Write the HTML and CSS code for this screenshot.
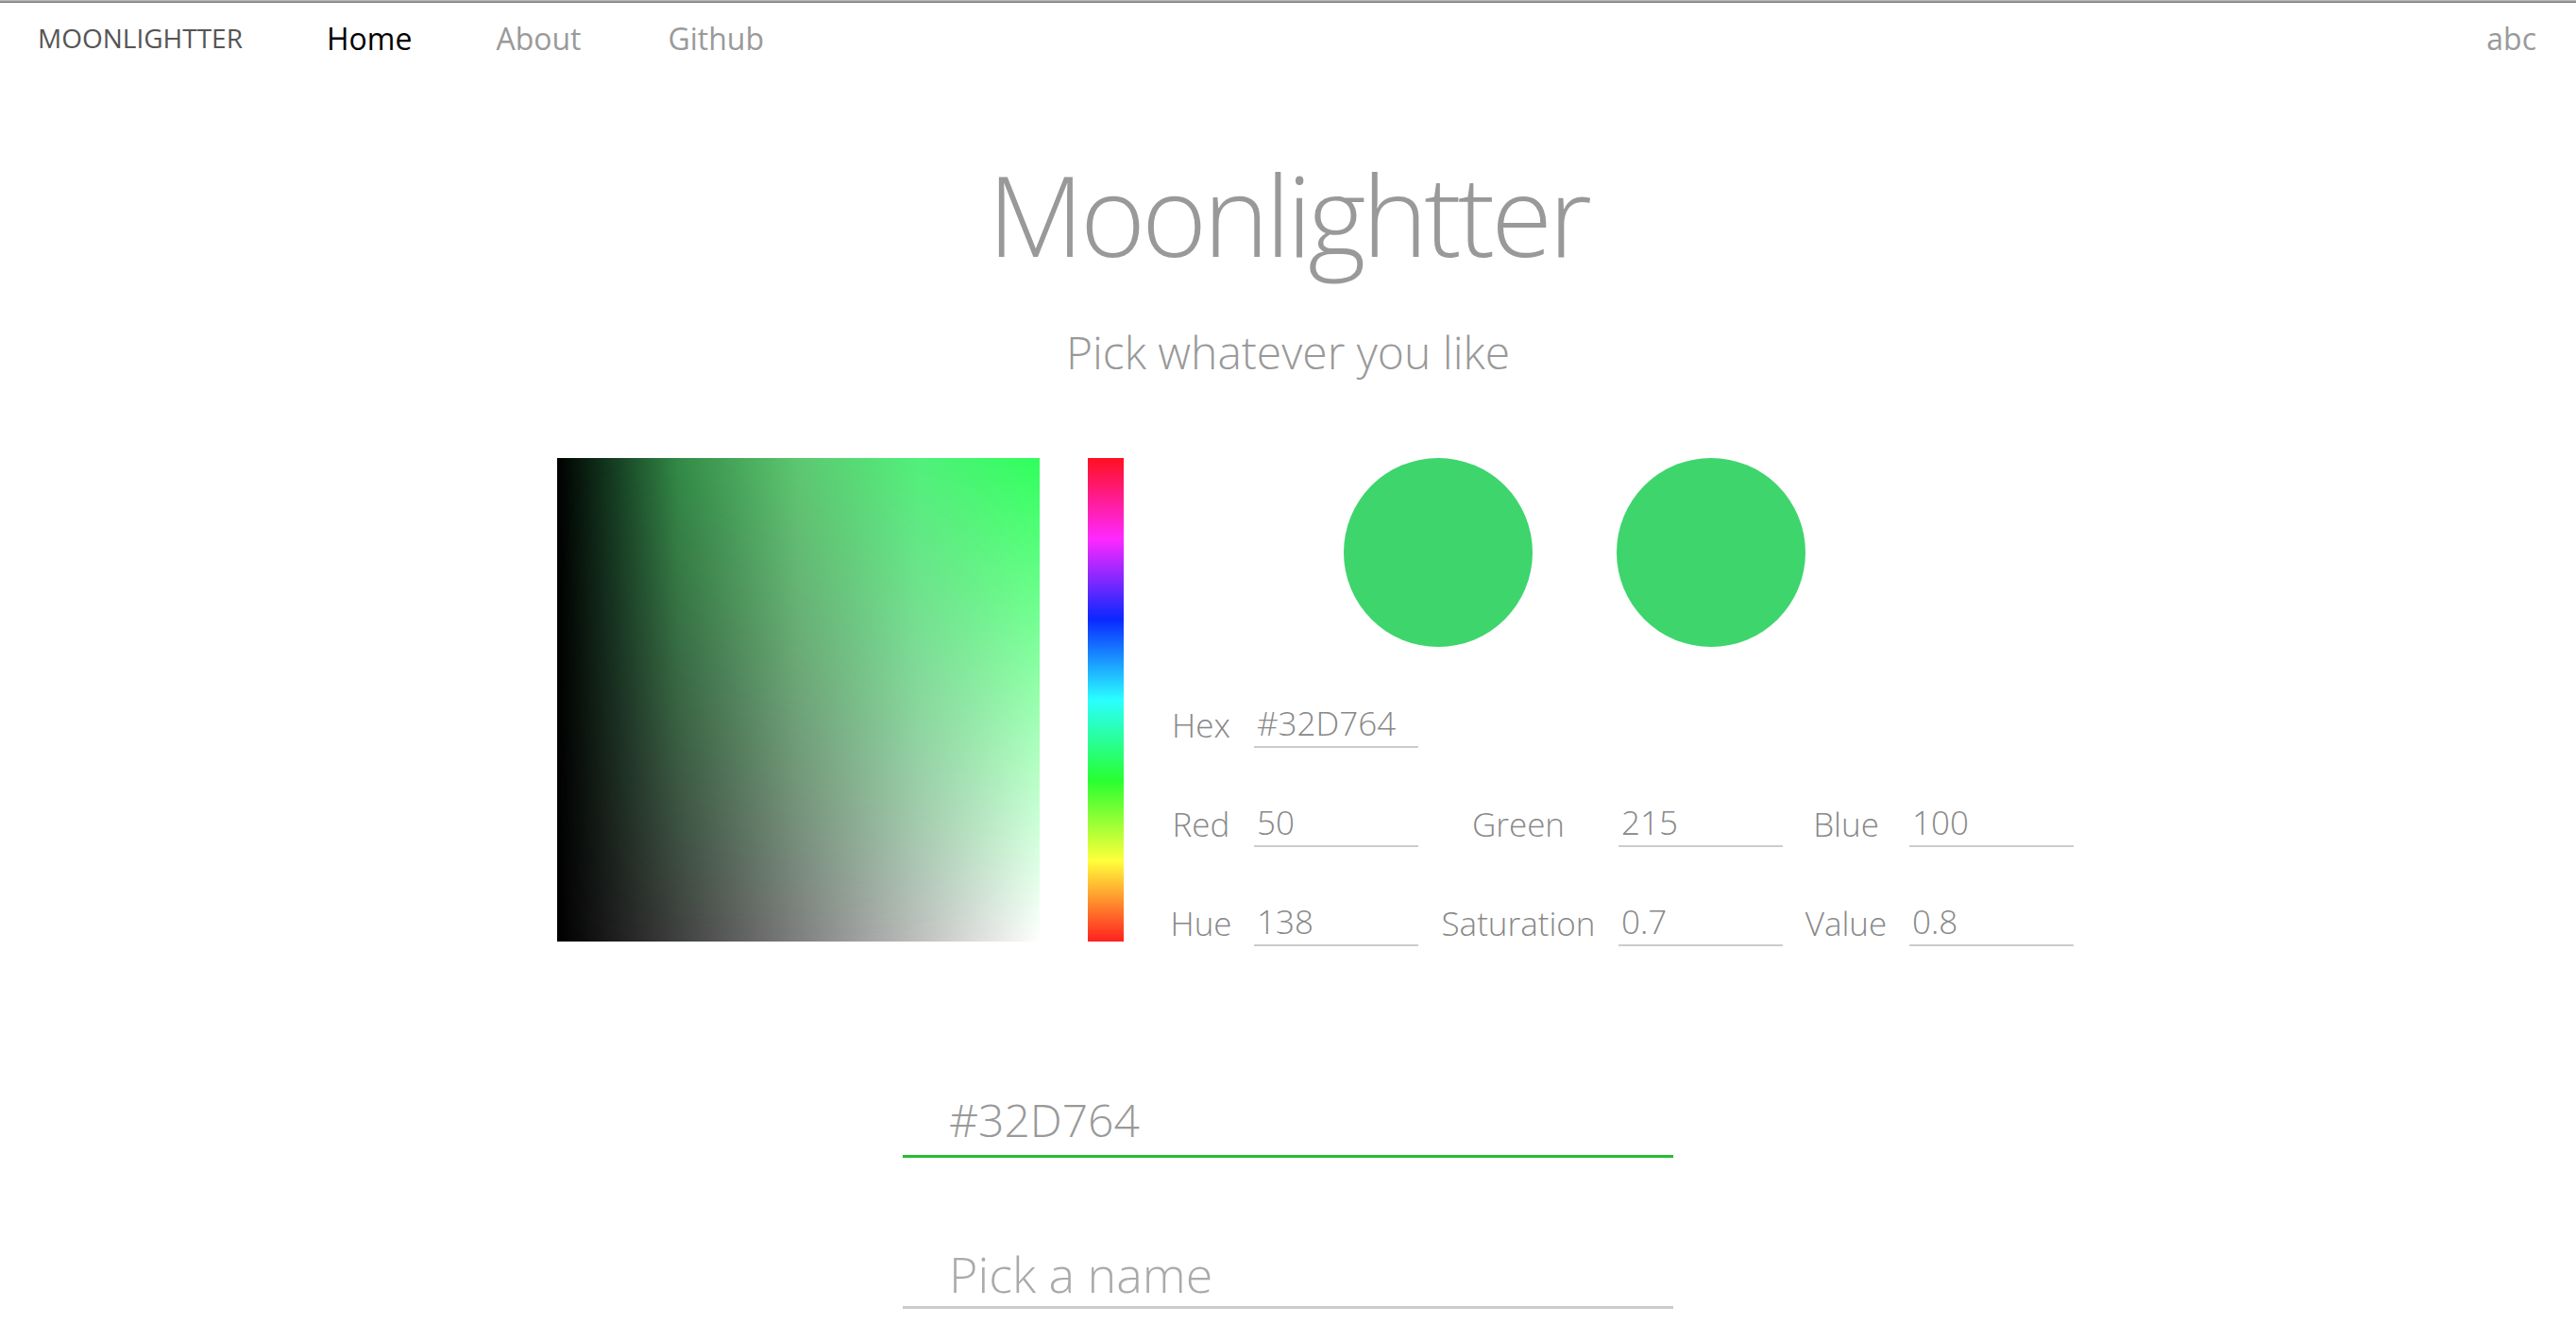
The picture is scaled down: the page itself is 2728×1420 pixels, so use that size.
FILE: index.html
```html
<!DOCTYPE html>
<html lang="en">
<head>
<meta charset="utf-8">
<title>Moonlightter</title>
<link rel="stylesheet" href="styles.css">
</head>
<body>
<div class="chrome"></div>
<nav class="nav">
  <span class="brand">MOONLIGHTTER</span>
  <ul class="links">
    <li class="link active">Home</li>
    <li class="link">About</li>
    <li class="link github">Github</li>
  </ul>
  <span class="user">abc</span>
</nav>
<main class="main">
  <h1 class="title">Moonlightter</h1>
  <p class="subtitle">Pick whatever you like</p>
  <div class="picker-wrap">
    <div class="picker">
      <div class="sv-square"></div>
      <div class="hue-bar"></div>
      <div class="panel">
        <div class="swatches">
          <div class="swatch"></div>
          <div class="swatch"></div>
        </div>
        <div class="fields">
          <span class="lbl">Hex</span><span class="val">#32D764</span>
          <span class="lbl"></span><span class="empty"></span><span class="lbl"></span><span class="empty"></span>
          <span class="lbl">Red</span><span class="val">50</span>
          <span class="lbl">Green</span><span class="val">215</span>
          <span class="lbl">Blue</span><span class="val">100</span>
          <span class="lbl">Hue</span><span class="val">138</span>
          <span class="lbl">Saturation</span><span class="val">0.7</span>
          <span class="lbl">Value</span><span class="val">0.8</span>
        </div>
      </div>
    </div>
  </div>
  <div class="big-input focused">#32D764</div>
  <div class="big-input placeholder">Pick a name</div>
</main>
</body>
</html>
```
FILE: styles.css
```css
html, body {
  margin: 0;
  padding: 0;
  background: #fff;
  font-family: "Open Sans", "Noto Sans", sans-serif;
}
.chrome {
  height: 3px;
  background: linear-gradient(to bottom, #c8c8c8, #6d6d6d);
}
.nav {
  height: 74px;
  display: flex;
  align-items: center;
  padding: 0 42px 0 40px;
}
.brand {
  font-size: 28px;
  color: #555;
  font-weight: 400;
}
.links {
  list-style: none;
  margin: 0 0 0 89px;
  padding: 0;
  display: flex;
  gap: 89px;
}
.link {
  font-size: 32px;
  color: #9a9a9a;
}
.link.active {
  color: #000;
}
.link.github {
  margin-left: 3px;
}
.user {
  margin-left: auto;
  font-size: 32px;
  color: #9a9a9a;
}
.main {
  display: flex;
  flex-direction: column;
  align-items: center;
}
.title {
  margin: 79px 0 0;
  font-size: 118px;
  letter-spacing: -4px;
  line-height: 1.2;
  font-weight: 300;
  color: #999;
}
.subtitle {
  margin: 46px 0 0;
  font-size: 48px;
  line-height: 1.2;
  font-weight: 300;
  color: #999;
}
.picker-wrap {
  align-self: stretch;
  display: flex;
  justify-content: center;
  margin-top: 84px;
}
.picker {
  width: 1606px;
  margin-left: 58px;
  display: flex;
  align-items: flex-start;
}
.sv-square {
  position: relative;
  width: 512px;
  height: 512px;
  background: linear-gradient(to right, #000, #fff);
}
.sv-square::before {
  content: "";
  position: absolute;
  inset: 0;
  background: linear-gradient(to right,
    #000 0%, rgb(22, 66, 36) 12.5%, rgb(50, 138, 70) 25%,
    rgb(92, 200, 112) 50%, rgb(80, 240, 122) 75%, #2fff5c 100%);
  -webkit-mask-image: linear-gradient(to bottom, #000, rgba(0, 0, 0, 0));
  mask-image: linear-gradient(to bottom, #000, rgba(0, 0, 0, 0));
}
.hue-bar {
  width: 38px;
  height: 512px;
  margin-left: 51px;
  background: linear-gradient(to bottom,
    #ff1020 0%, #ff28ff 16.7%, #0a28ff 33.3%, #2affff 50%,
    #28ff30 66.7%, #ffff3a 83.3%, #ff2020 100%);
}
.panel {
  margin-left: 26px;
  display: flex;
  flex-direction: column;
}
.swatches {
  display: flex;
  gap: 89px;
  margin-left: 207px;
}
.swatch {
  width: 200px;
  height: 200px;
  border-radius: 50%;
  background: #3ed56c;
}
.fields {
  margin-top: 57px;
  display: grid;
  grid-template-columns: 112px 174px 212px 174px 134px 174px;
  grid-auto-rows: 50px;
  row-gap: 55px;
  align-items: center;
}
.lbl {
  text-align: center;
  font-size: 35px;
  font-weight: 300;
  color: #888;
}
.val {
  box-sizing: border-box;
  height: 50px;
  padding-left: 3px;
  font-size: 35px;
  font-weight: 300;
  line-height: 48px;
  color: #888;
  border-bottom: 2px solid #ccc;
}
.big-input {
  box-sizing: border-box;
  width: 816px;
  height: 84px;
  padding: 8px 0 0 49px;
  font-size: 48px;
  font-weight: 300;
  line-height: 73px;
  color: #999;
  border-bottom: 3px solid #ccc;
}
.big-input.focused {
  margin-top: 140px;
  padding-top: 7px;
  border-bottom-color: #26bb34;
}
.big-input.placeholder {
  margin-top: 76px;
  padding-top: 10px;
  font-size: 52px;
  color: #aaa;
}
```
